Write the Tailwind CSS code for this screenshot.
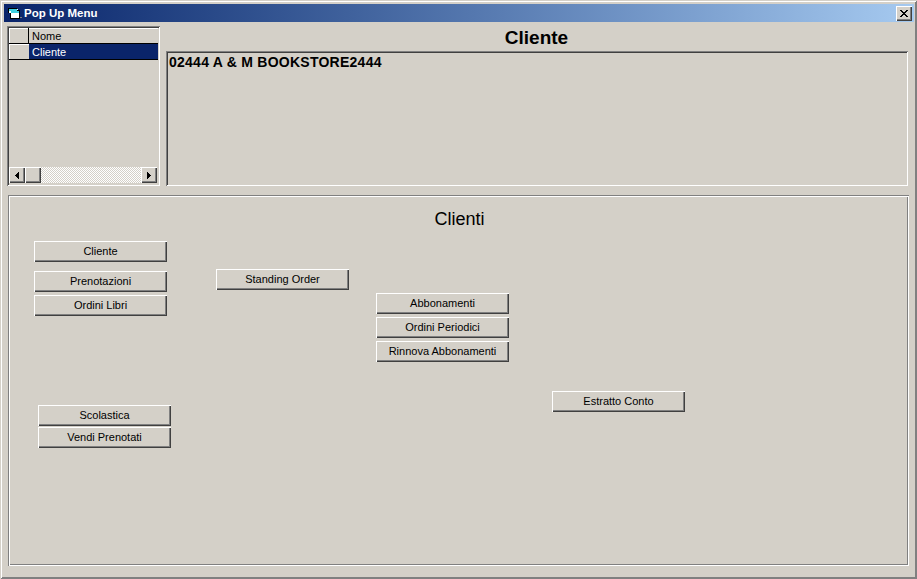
<!DOCTYPE html>
<html lang="en">
<head>
    <meta charset="UTF-8">
    <title>Pop Up Menu</title>
    <script src="https://cdn.jsdelivr.net/npm/@tailwindcss/browser@4"></script>
</head>
<body class="bg-[#d4d0c8] overflow-hidden font-['Liberation_Sans',Arial,sans-serif] text-black">
    <!-- Window -->
    <div class="w-[917px] h-[579px] flex flex-col p-1 bg-[#d4d0c8] shadow-[inset_1px_1px_0_#d4d0c8,inset_-1px_-1px_0_#808080,inset_2px_2px_0_#ffffff,inset_-2px_-2px_0_#808080]">
        <!-- Title bar -->
        <div class="h-[18px] shrink-0 flex items-center justify-between -mr-px pl-1 pr-[2px] bg-gradient-to-r from-[#0a246a] to-[#a6caf0]">
            <div class="flex items-center gap-[1px]">
                <svg width="15" height="11" viewBox="0 0 15 11" shape-rendering="crispEdges">
                    <path d="M0 0h9v1h1v1h2v8H2V5H0z" fill="#ffffff"/>
                    <path d="M1 1h8v2H1zM3 3h8v2H3z" fill="#40d0e0"/>
                    <path d="M0 0h9v1H0zM0 1h1v4H0zM2 5h1v5H2zM2 10h10v1H2zM11 3h1v7h-1zM9 2h3v1H9z" fill="#000000"/>
                    <path d="M12 9h2v1h-2z" fill="#808080"/>
                </svg>
                <span class="text-[11.5px] leading-none font-bold text-white pt-px">Pop Up Menu</span>
            </div>
            <button class="w-4 h-[15px] flex items-center justify-center bg-[#d4d0c8] shadow-[inset_1px_1px_0_#ffffff,inset_-1px_-1px_0_#404040,inset_-2px_-2px_0_#808080]">
                <svg width="8" height="7" viewBox="0 0 8 7" shape-rendering="crispEdges"><path d="M0 0h2v1h1v1h2V1h1V0h2v1H7v1H6v1H5v1h1v1h1v1h1v1H6V6H5V5H3v1H2v1H0V6h1V5h1V4h1V3H2V2H1V1H0z" fill="#000000"/></svg>
            </button>
        </div>

        <!-- Top row -->
        <div class="flex mt-1 ml-[3px] h-[160px] shrink-0">
            <!-- List grid -->
            <div class="w-[153px] flex flex-col p-[2px] shadow-[inset_1px_1px_0_#808080,inset_-1px_-1px_0_#ffffff,inset_2px_2px_0_#404040]">
                <div class="flex h-4 text-[11px] leading-4">
                    <div class="w-5 bg-[#d4d0c8] border-r border-b border-black shadow-[inset_1px_1px_0_#ffffff]"></div>
                    <div class="flex-1 pl-[3px] border-b border-black shadow-[inset_0_1px_0_#ffffff]">Nome</div>
                </div>
                <div class="flex h-4 text-[11px] leading-4">
                    <div class="w-5 bg-[#d4d0c8] border-b border-black shadow-[inset_1px_1px_0_#ffffff]"></div>
                    <div class="flex-1 pl-[3px] bg-[#0a246a] text-white border-b border-black">Cliente</div>
                </div>
                <div class="flex-1"></div>
                <!-- Horizontal scrollbar -->
                <div class="flex h-4 mr-[1px] mb-[1px]">
                    <div class="w-4 flex items-center justify-center shadow-[inset_1px_1px_0_#ffffff,inset_-1px_-1px_0_#404040,inset_-2px_-2px_0_#808080]">
                        <svg width="4" height="7" viewBox="0 0 4 7" shape-rendering="crispEdges"><path d="M3 0h1v7H3V6H2V5H1V4H0V3h1V2h1V1h1z" fill="#000000"/></svg>
                    </div>
                    <div class="w-4 shadow-[inset_1px_1px_0_#ffffff,inset_-1px_-1px_0_#404040,inset_-2px_-2px_0_#808080]"></div>
                    <div class="flex-1 bg-[repeating-conic-gradient(#ffffff_0_25%,#d4d0c8_0_50%)] bg-[length:2px_2px]"></div>
                    <div class="w-4 flex items-center justify-center shadow-[inset_1px_1px_0_#ffffff,inset_-1px_-1px_0_#404040,inset_-2px_-2px_0_#808080]">
                        <svg width="4" height="7" viewBox="0 0 4 7" shape-rendering="crispEdges"><path d="M0 0h1v1h1v1h1v1h1v1H3v1H2v1H1v1H0z" fill="#000000"/></svg>
                    </div>
                </div>
            </div>
            <!-- Client box -->
            <div class="flex flex-col ml-[6px] w-[742px]">
                <div class="h-[25px] flex items-center justify-center pb-[2px] pr-px text-[19px] leading-none font-bold">Cliente</div>
                <div class="flex-1 pl-[3px] pt-[3px] text-[14px] tracking-[0.25px] leading-4 font-bold shadow-[inset_1px_1px_0_#808080,inset_-1px_-1px_0_#ffffff,inset_2px_2px_0_#404040]">02444 A &amp; M BOOKSTORE2444</div>
            </div>
        </div>

        <!-- Clienti panel -->
        <div class="flex flex-col w-[901px] h-[371px] ml-1 mt-[9px] shrink-0 shadow-[inset_1px_1px_0_#808080,inset_-1px_-1px_0_#ffffff,inset_2px_2px_0_#ffffff,inset_-2px_-2px_0_#808080]">
            <div class="h-[46px] pt-[13px] pl-[2px] shrink-0 text-center text-[18px] leading-[22px]">Clienti</div>
            <div class="flex text-[11px]">
                <div class="flex flex-col w-[182px] ml-[26px]">
                    <button class="w-[133px] h-[21px] pb-px shadow-[inset_1px_1px_0_#ffffff,inset_-1px_-1px_0_#404040,inset_-2px_-2px_0_#808080]">Cliente</button>
                    <button class="w-[133px] h-[21px] pb-px mt-[9px] shadow-[inset_1px_1px_0_#ffffff,inset_-1px_-1px_0_#404040,inset_-2px_-2px_0_#808080]">Prenotazioni</button>
                    <button class="w-[133px] h-[21px] pb-px mt-[3px] shadow-[inset_1px_1px_0_#ffffff,inset_-1px_-1px_0_#404040,inset_-2px_-2px_0_#808080]">Ordini Libri</button>
                    <button class="w-[133px] h-[21px] pb-px mt-[89px] ml-1 shadow-[inset_1px_1px_0_#ffffff,inset_-1px_-1px_0_#404040,inset_-2px_-2px_0_#808080]">Scolastica</button>
                    <button class="w-[133px] h-[21px] pb-px mt-px ml-1 shadow-[inset_1px_1px_0_#ffffff,inset_-1px_-1px_0_#404040,inset_-2px_-2px_0_#808080]">Vendi Prenotati</button>
                </div>
                <div class="w-[160px] pt-[28px]">
                    <button class="w-[133px] h-[21px] pb-px shadow-[inset_1px_1px_0_#ffffff,inset_-1px_-1px_0_#404040,inset_-2px_-2px_0_#808080]">Standing Order</button>
                </div>
                <div class="flex flex-col w-[176px] pt-[52px]">
                    <button class="w-[133px] h-[21px] pb-px shadow-[inset_1px_1px_0_#ffffff,inset_-1px_-1px_0_#404040,inset_-2px_-2px_0_#808080]">Abbonamenti</button>
                    <button class="w-[133px] h-[21px] pb-px mt-[3px] shadow-[inset_1px_1px_0_#ffffff,inset_-1px_-1px_0_#404040,inset_-2px_-2px_0_#808080]">Ordini Periodici</button>
                    <button class="w-[133px] h-[21px] pb-px mt-[3px] shadow-[inset_1px_1px_0_#ffffff,inset_-1px_-1px_0_#404040,inset_-2px_-2px_0_#808080]">Rinnova Abbonamenti</button>
                </div>
                <div class="pt-[150px]">
                    <button class="w-[133px] h-[21px] pb-px shadow-[inset_1px_1px_0_#ffffff,inset_-1px_-1px_0_#404040,inset_-2px_-2px_0_#808080]">Estratto Conto</button>
                </div>
            </div>
        </div>
    </div>
</body>
</html>
